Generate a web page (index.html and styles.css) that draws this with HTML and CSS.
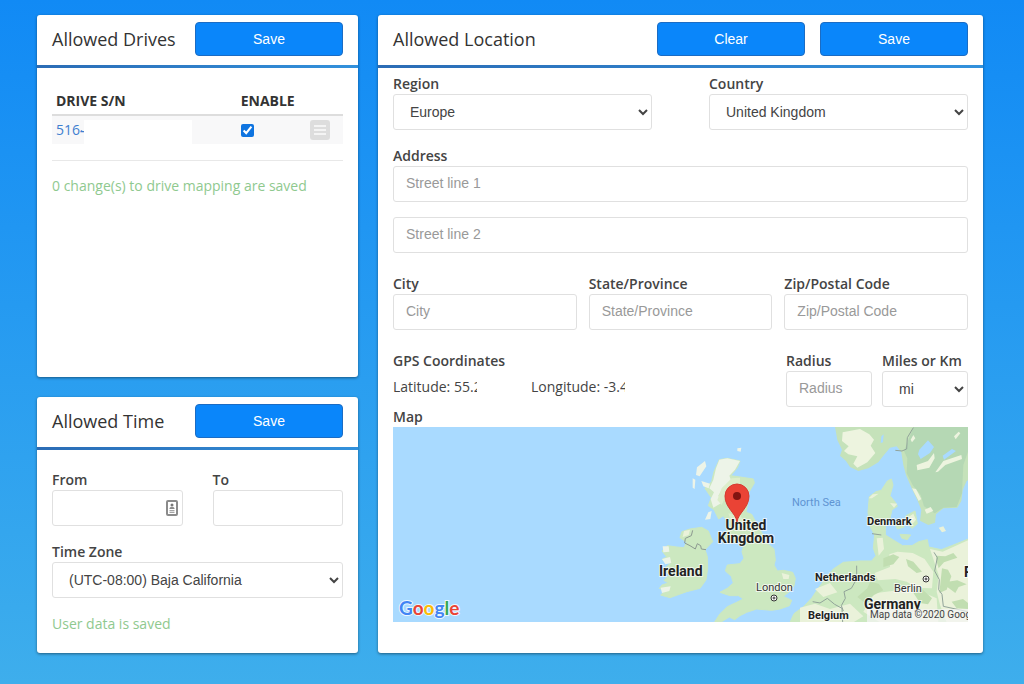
FILE: index.html
```html
<!DOCTYPE html>
<html lang="en">
<head>
<meta charset="utf-8">
<meta name="viewport" content="width=device-width, initial-scale=1">
<title>Drive access settings</title>
<link rel="stylesheet" href="styles.css">
</head>
<body>
<main class="page">
  <div class="column">
    <section class="card card-grow">
      <header class="card-header">
        <h2 class="card-title">Allowed Drives</h2>
        <button class="btn" type="button">Save</button>
      </header>
      <div class="card-body drives-body">
        <table class="drives">
          <thead>
            <tr><th class="col-serial" scope="col">DRIVE S/N</th><th class="col-enable" scope="col">ENABLE</th><th class="col-menu"></th></tr>
          </thead>
          <tbody>
            <tr>
              <td><div class="serial"><a href="#drive">516<span class="cut cut-low">4</span></a><span class="serial-mask"></span></div></td>
              <td class="enable-cell"><input class="check" type="checkbox" aria-label="Enable drive" checked></td>
              <td><button class="menu-btn" type="button" aria-label="Drive menu"><svg width="20" height="20" viewBox="0 0 20 20"><rect width="20" height="20" rx="3" fill="#dddddd"/><path d="M4 6h12M4 10h12M4 14h12" stroke="#f4f4f4" stroke-width="2"/></svg></button></td>
            </tr>
          </tbody>
        </table>
        <p class="status status-ruled">0 change(s) to drive mapping are saved</p>
      </div>
    </section>

    <section class="card">
      <header class="card-header">
        <h2 class="card-title">Allowed Time</h2>
        <button class="btn" type="button">Save</button>
      </header>
      <form class="card-body time-body">
        <div class="row row-time">
          <div class="field">
            <label for="from">From</label>
            <div class="input-icon">
              <input class="control" id="from" type="text">
              <svg class="contact-icon" width="12" height="16" viewBox="0 0 12 16" aria-hidden="true"><rect x="1" y="1" width="10" height="14" rx="1" fill="#fff" stroke="#8b8b8b" stroke-width="2"/><circle cx="6" cy="5" r="1.5" fill="#777"/><path d="M3.5 9V8.2Q3.5 7 6 7t2.500 1.200V9zM3.500 10.300h5v1h-5zM3.500 12.200h5v.8h-5z" fill="#888"/></svg>
            </div>
          </div>
          <div class="field">
            <label for="to">To</label>
            <input class="control" id="to" type="text">
          </div>
        </div>
        <div class="field">
          <label for="zone">Time Zone</label>
          <select class="control" id="zone"><option>(UTC-08:00) Baja California</option></select>
        </div>
        <p class="status">User data is saved</p>
      </form>
    </section>
  </div>

  <section class="card">
    <header class="card-header">
      <h2 class="card-title">Allowed Location</h2>
      <button class="btn" type="button">Clear</button>
      <button class="btn" type="button">Save</button>
    </header>
    <form class="card-body location-body">
      <div class="row row-region">
        <div class="field">
          <label for="region">Region</label>
          <select class="control" id="region"><option>Europe</option></select>
        </div>
        <div class="field">
          <label for="country">Country</label>
          <select class="control" id="country"><option>United Kingdom</option></select>
        </div>
      </div>
      <div class="field address">
        <label for="street1">Address</label>
        <input class="control" id="street1" type="text" placeholder="Street line 1">
        <input class="control street2" type="text" placeholder="Street line 2" aria-label="Street line 2">
      </div>
      <div class="row row-city">
        <div class="field">
          <label for="city">City</label>
          <input class="control" id="city" type="text" placeholder="City">
        </div>
        <div class="field">
          <label for="state">State/Province</label>
          <input class="control" id="state" type="text" placeholder="State/Province">
        </div>
        <div class="field">
          <label for="zip">Zip/Postal Code</label>
          <input class="control" id="zip" type="text" placeholder="Zip/Postal Code">
        </div>
      </div>
      <div class="row row-gps">
        <div>
          <h3 class="caption">GPS Coordinates</h3>
          <div class="coords">
            <span>Latitude: 55.<span class="cut">2</span></span>
            <span>Longitude: -3.<span class="cut cut-wide">4</span></span>
          </div>
        </div>
        <div class="field">
          <label for="radius">Radius</label>
          <input class="control" id="radius" type="text" placeholder="Radius">
        </div>
        <div class="field">
          <label for="unit">Miles or Km</label>
          <select class="control" id="unit"><option>mi</option></select>
        </div>
      </div>
      <h3 class="caption">Map</h3>
      <svg class="map" viewBox="0 0 575 195" preserveAspectRatio="xMidYMid slice" role="img" aria-label="Map of the United Kingdom and North Sea">
        <rect width="575" height="195" fill="#a9daff"/>
        <!-- British Isles -->
        <g transform="translate(247 -2) scale(.33333)">
          <path fill="#cce8c0" stroke="#cce8c0" stroke-width="3" stroke-linejoin="round" d="M238 104L262 100 300 108 292 128 272 152 300 156 340 162 343 174 325 205 322 240 318 262 335 268 352 300 375 340 385 358 402 372 406 405 402 420 412 438 430 436 458 442 466 460 462 482 448 500 430 514 455 526 448 542 420 552 395 556 350 552 320 562 300 572 284 584 268 576 245 590 222 594 240 566 262 545 290 532 310 522 296 512 270 512 240 502 262 490 280 474 274 454 256 438 262 420 300 416 312 400 306 380 310 366 300 350 270 354 250 335 268 300 250 272 236 282 222 254 205 242 214 218 195 190 215 170 222 140Z"/>
          <path fill="#edf4e8" d="M238 104L262 100 300 108 285 134 268 152 275 170 250 186 235 212 248 232 220 248 212 222 222 202 208 190 220 164 228 130Z"/>
          <path fill="#dceecb" d="M275 160L300 158 300 178 265 195 245 240 232 225 245 190ZM265 265L302 272 318 300 280 310Z"/>
          <path fill="#cce8c0" stroke="#cce8c0" stroke-width="3" stroke-linejoin="round" d="M150 312L185 307 205 318 218 350 195 374 202 395 203 430 198 465 180 490 140 500 90 518 62 510 76 498 58 490 66 480 85 474 72 466 88 450 70 434 94 412 66 404 80 395 66 378 82 362 110 366 132 368 140 352 120 338 126 320Z"/>
          <path fill="#edf4e8" d="M168 150L171 127 195 108 199 124 179 154ZM158 160L166 164 164 192 158 188ZM184 168L210 176 206 190 190 184ZM292 70L304 68 302 80 292 78ZM68 364L86 364 88 380 70 382ZM66 402L90 396 94 414 76 418ZM62 488L92 484 88 498 66 504ZM205 262l10-4-4 24-16 2z"/>
          <path fill="#eaf2da" d="M132 318L150 314 146 330 128 336ZM425 444L448 450 446 462 430 462Z"/>
          <path fill="none" stroke="#8c9990" stroke-width="3" d="M158 316L154 332 136 340 134 354 150 362 166 372 172 356 182 362 184 372 198 374"/>
        </g>
        <!-- Scandinavia and the continent -->
        <g transform="translate(407 -2) scale(.33333)">
          <path fill="#c5e2ba" d="M104 0H520V155L500 168 488 195 484 228 472 248 430 250 408 268 405 293 385 300 360 287 364 255 352 225 335 190 318 150 310 120 304 82 290 64 270 68 250 92 235 112 205 130 175 138 150 126 138 108 120 92 126 74 112 45Z"/>
          <path fill="#b5d8b4" d="M340 6L504 6 504 80 490 120 486 205 470 246 430 248 404 265 372 244 362 210 338 180 320 145 322 100 312 78 324 48Z"/>
          <path fill="#edf4df" d="M128 22L180 12 208 28 222 44 212 62 226 84 202 112 172 128 160 116 172 94 145 88 132 78 146 64 126 48ZM374 254L392 246 400 258 380 266ZM384 108L402 84 404 100 388 128 352 136 350 120ZM406 142L430 108 484 90 486 102 436 120 414 140ZM336 190l12 2 16 30-8 6zM332 44l8-14 6 10-10 12zM462 34l14-14 5 5-14 18z"/>
          <path fill="#a9daff" d="M358 74L384 46 402 66 390 84 362 102 354 88ZM428 92L456 72 468 78 432 104ZM244 34l7-6-2 24-7 2z"/>
          <path fill="#cce8c0" stroke="#cce8c0" stroke-width="3" stroke-linejoin="round" d="M-30 592L-18 566 12 544 36 518 56 488 76 462 100 432 130 412 180 408 215 408 228 392 220 370 224 330 208 300 204 262 208 215 228 200 244 196 262 168 274 162 279 180 270 212 286 232 292 244 276 254 270 280 256 302 256 330 280 345 308 362 336 362 356 350 382 344 386 366 424 374 455 362 510 340V600H-30ZM318 272L345 258 352 296 336 310 322 296ZM282 286L304 286 312 306 292 312ZM300 328L332 330 322 344 306 340Z"/>
          <path fill="#eaf2da" d="M390 372L428 380 504 346 504 592 440 592 420 540 410 500 416 450 402 408ZM268 388L292 380 338 384 374 402 400 440 396 490 350 488 320 470 286 462 234 466 224 444 270 426ZM224 505L340 490 410 520 415 592 240 592 190 560ZM45 492L90 474 112 502 70 516ZM0 548L45 536 90 552 150 536 190 574 160 592 0 592ZM206 220L218 208 236 206 216 220ZM270 234L292 236 282 248ZM416 308L430 304 438 318 426 322ZM320 280l20-14 8 18-10 12zM230 340l18-2 4 34-16 20z"/>
          <path fill="#c1deb1" d="M250 400l30-12 18 8-18 22-30 8zM318 402l22 8 26 30-16 4-26-20zM408 392l28 2 24-10 12 14-40 14-16 18-6-20zM426 430l18 4 10 20-14 40-22 10zM444 470l28-4 28 12-24 8-10 18-24-18zM338 500l28-8 30 28-12 18-24-4zM210 470l26 6 14 20-28 14-30 22-20-16 30-26zM455 530l34-8 15 12v18l-34-2z"/>
          <path fill="none" stroke="#91a399" stroke-width="3" d="M340 8L322 38 320 72 306 78 286 76M216 326L244 330M170 422L170 462 154 490 132 500 136 520 124 542 130 558M38 530L60 534 82 520 104 538 126 550 128 592M402 382L412 398 404 438 418 464 416 494 426 508 430 544 504 560"/>
        </g>
        <g class="map-text">
          <text class="map-sea" x="399" y="79">North Sea</text>
          <text class="map-country" x="353" y="103" text-anchor="middle">United</text>
          <text class="map-country" x="353" y="116" text-anchor="middle">Kingdom</text>
          <text class="map-country" x="266" y="149">Ireland</text>
          <text class="map-small" x="474" y="98">Denmark</text>
          <text class="map-small" x="422" y="154">Netherlands</text>
          <text class="map-small" x="415" y="192">Belgium</text>
          <text class="map-country" x="471" y="182">Germany</text>
          <text class="map-country" x="571" y="150">Poland</text>
          <text class="map-city" x="363" y="164">London</text>
          <text class="map-city" x="501" y="165">Berlin</text>
        </g>
        <g fill="#fff" stroke="#333">
          <circle cx="381" cy="171" r="3"/><circle cx="533" cy="152" r="3"/>
          <circle cx="381" cy="171" r="1"/><circle cx="533" cy="152" r="1"/>
        </g>
        <path d="M344 95C343 86 332 81 332 69a12 12 0 0 1 24 0C356 81 345 86 344 95Z" fill="#ea4335" stroke="#d53b30"/>
        <circle cx="344" cy="69" r="4" fill="#811411"/>
        <rect x="474" y="182" width="101" height="13" fill="#f5f5f5" fill-opacity=".7"/>
        <text class="map-credit" x="477" y="191">Map data ©2020 Google</text>
        <text class="map-logo" x="6" y="188"><tspan fill="#4285f4">G</tspan><tspan fill="#ea4335">o</tspan><tspan fill="#fbbc05">o</tspan><tspan fill="#4285f4">g</tspan><tspan fill="#34a853">l</tspan><tspan fill="#ea4335">e</tspan></text>
      </svg>
    </form>
  </section>
</main>
</body>
</html>
```
FILE: styles.css
```css
* { box-sizing: border-box; }

body {
  margin: 0;
  min-height: 100vh;
  background: linear-gradient(#118af5, #3eaeec) no-repeat #3eaeec;
  color: #444;
  font: 14px/20px "Open Sans", "Noto Sans", sans-serif;
}

.page {
  display: grid;
  grid-template-columns: minmax(0, 321fr) minmax(0, 605fr);
  gap: 20px;
  padding: 15px 41px 31px 37px;
}

.column { display: flex; flex-direction: column; gap: 20px; }

.card {
  background: #fff;
  border-radius: 3px;
  box-shadow: 0 1px 3px rgba(0, 0, 0, .45);
}
.card-grow { flex: 1; }

.card-header {
  display: flex;
  align-items: center;
  gap: 15px;
  padding: 7px 15px 12px;
  background: linear-gradient(90deg, #2b6cb5, #3291dc) bottom / 100% 3px no-repeat;
}
.card-title {
  flex: 1;
  margin: 0;
  color: #333;
  font-size: 18px;
  font-weight: 400;
  line-height: 24px;
  white-space: nowrap;
}

.btn {
  width: 148px;
  height: 34px;
  border: 1px solid #1b6cc4;
  border-radius: 4px;
  background: #0a86fa;
  color: #fff;
  font: 14px "Liberation Sans", Arial, sans-serif;
}

.card-body { padding: 0 15px; }
.drives-body { padding-top: 23px; }
.time-body { display: grid; gap: 16px; padding-top: 20px; padding-bottom: 19px; }
.location-body { padding-top: 6px; padding-bottom: 31px; }

.row { display: grid; }
.row-time { grid-template-columns: 1fr 1fr; gap: 30px; }
.row-region { grid-template-columns: 1fr 1fr; gap: 57px; }
.row-city { grid-template-columns: repeat(3, 1fr); gap: 12px; margin-top: 21px; }
.row-gps { grid-template-columns: 1fr 86px 86px; gap: 10px; margin-top: 21px; }
.address { margin-top: 16px; }
.street2 { margin-top: 15px; }

.field { min-width: 0; }
label, .caption {
  display: block;
  margin: 0;
  font-size: 14px;
  font-weight: 600;
  line-height: 20px;
  white-space: nowrap;
}

.control {
  display: block;
  width: 100%;
  height: 36px;
  padding: 0 12px 2px;
  border: 1px solid #e0e0e0;
  border-radius: 3px;
  background: #fff;
  color: #444;
  font: 14px "Liberation Sans", Arial, sans-serif;
}
select.control { padding: 0 0 1px 12px; }
.control::placeholder { color: #999; opacity: 1; }

.input-icon { position: relative; }
.contact-icon { position: absolute; top: 10px; right: 5px; }

.drives { width: 100%; border-collapse: collapse; table-layout: fixed; }
.drives th {
  padding: 0 4px 3px;
  border-bottom: 2px solid #ddd;
  color: #333;
  font-size: 14px;
  font-weight: 700;
  text-align: left;
  white-space: nowrap;
}
.drives td { height: 28px; padding: 0; background: #f8f8f9; }
.col-serial { width: 48%; }
.col-enable { width: 38%; }
.drives th.col-enable { padding-left: 49px; }
.serial { display: flex; align-items: center; height: 28px; padding-left: 4px; }
.serial a { display: flex; color: #3f7fd0; text-decoration: none; }
.serial-mask { flex: 1; align-self: stretch; margin-top: 4px; background: #fff; }
.drives .enable-cell { padding-left: 49px; }
.check { display: block; width: 13px; height: 13px; margin: 0; accent-color: #0f74e0; }
.menu-btn { display: block; padding: 0; border: 0; margin-left: 8px; background: none; }
.menu-btn svg { display: block; }

.cut { display: inline-block; width: 3px; overflow: hidden; vertical-align: top; }
.cut-wide { width: 5px; }
.cut-low { width: 4px; clip-path: inset(50% 0 0 0); }

.status { margin: 0; color: #8fc98f; }
.status-ruled { margin-top: 16px; padding-top: 15px; border-top: 1px solid #e8e8e8; }

.coords { display: grid; grid-template-columns: 138px 1fr; padding-top: 6px; white-space: nowrap; }

.map { display: block; width: 100%; height: 195px; }
.map-text text { paint-order: stroke; stroke: #fff; stroke-opacity: .7; stroke-width: 2px; fill: #222; font-family: Roboto, sans-serif; }
.map-text .map-country { font-size: 14px; font-weight: 700; }
.map-text .map-small { font-size: 11px; font-weight: 700; }
.map-text .map-city { font-size: 11px; fill: #333; }
.map-text .map-sea { font-size: 11px; fill: #5f94d2; stroke: none; }
.map-credit { font: 10px Roboto, sans-serif; fill: #444; }
.map-logo { font: 700 19px Lato, sans-serif; paint-order: stroke; stroke: #fff; stroke-opacity: .8; stroke-width: 2px; }
```
